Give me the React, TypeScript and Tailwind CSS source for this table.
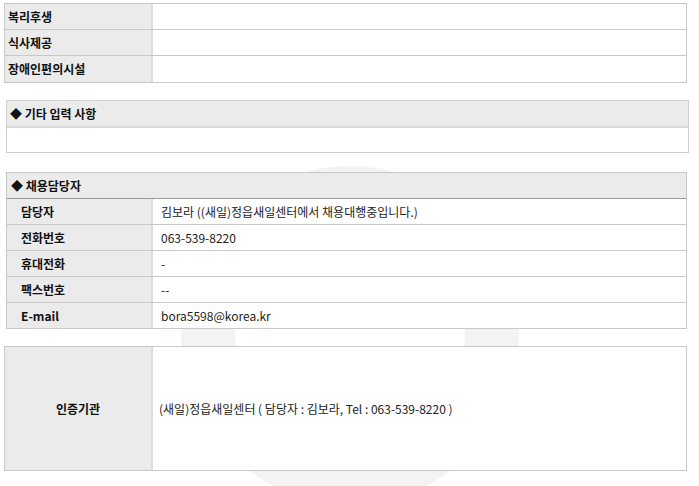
import React from 'react';

const font = { fontFamily: '"Noto Sans CJK KR", "Noto Sans", sans-serif' };

const welfareRows = ['복리후생', '식사제공', '장애인편의시설'];

const contactRows: [string, string][] = [
  ['담당자', '김보라 ((새일)정읍새일센터에서 채용대행중입니다.)'],
  ['전화번호', '063-539-8220'],
  ['휴대전화', '-'],
  ['팩스번호', '--'],
  ['E-mail', 'bora5598@korea.kr'],
];

// faint logo watermark behind the tables
const Watermark = () => (
  <svg className="absolute left-0 top-0 pointer-events-none" width="699" height="486" viewBox="0 0 699 486">
    <circle cx="350" cy="335" r="142" fill="none" stroke="#f3f3f3" strokeWidth="54" />
  </svg>
);

const App: React.FC = () => {
  return (
    <div className="relative w-[699px] h-[486px] bg-white text-[12px] text-[#222] overflow-hidden" style={font}>
      <Watermark />
      <div className="relative flex flex-col pt-[3px]">
        {/* 복리후생 */}
        <div className="ml-[4px] w-[683px] border border-[#c8c8c8] bg-white">
          {welfareRows.map((label, i) => (
            <div key={label} className={`flex h-[26px] ${i < welfareRows.length - 1 ? 'border-b border-[#c8c8c8]' : ''}`}>
              <div className="w-[148px] bg-[#ebebeb] border-r-2 border-[#dcdcdc] flex items-center pl-[3px] font-bold text-[#111]">
                {label}
              </div>
              <div className="flex-1" />
            </div>
          ))}
        </div>

        {/* 기타 입력 사항 */}
        <div className="mt-[17px] ml-[6px] w-[683px] border border-[#d0d0d0] bg-white">
          <div className="h-[27px] bg-[#ebebeb] border-b-2 border-[#d8d8d8] flex items-center pl-[3px] font-bold text-[#111]">
            ◆ 기타 입력 사항
          </div>
          <div className="h-[24px]" />
        </div>

        {/* 채용담당자 */}
        <div className="mt-[19px] ml-[6px] w-[681px] border border-[#c8c8c8] bg-white">
          <div className="h-[26px] bg-[#ebebeb] border-b border-[#9a9a9a] flex items-center pl-[4px] font-bold text-[#111]">
            ◆ 채용담당자
          </div>
          {contactRows.map(([label, value], i) => (
            <div key={label} className={`flex ${i < contactRows.length - 1 ? 'h-[26px] border-b border-[#c8c8c8]' : 'h-[25px]'}`}>
              <div className="w-[146px] bg-[#ebebeb] border-r-2 border-[#dcdcdc] flex items-center pl-[14px] font-bold text-[#111]">
                {label}
              </div>
              <div className="flex-1 flex items-center pl-[8px] text-[#222]">{value}</div>
            </div>
          ))}
        </div>

        {/* 인증기관 */}
        <div className="mt-[17px] ml-[4px] w-[683px] h-[125px] border border-[#c8c8c8] bg-white flex">
          <div className="w-[148px] bg-[#ebebeb] border-r-2 border-[#dcdcdc] flex items-center justify-center font-bold text-[#111]">
            인증기관
          </div>
          <div className="flex-1 flex items-center pl-[6px] text-[#222]">
            (새일)정읍새일센터 ( 담당자 : 김보라, Tel : 063-539-8220 )
          </div>
        </div>
      </div>
    </div>
  );
};

export default App;
